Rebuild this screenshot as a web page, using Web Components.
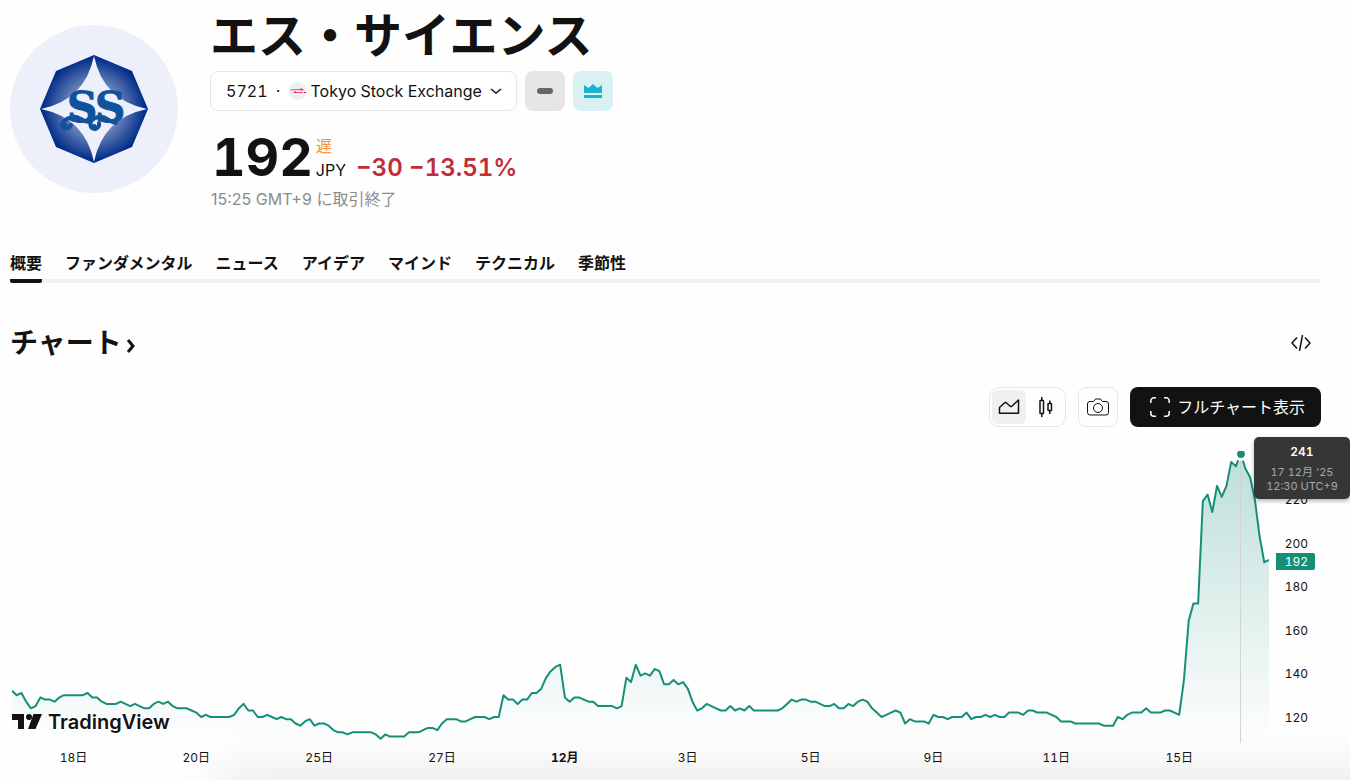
<!DOCTYPE html>
<html lang="ja">
<head>
<meta charset="utf-8">
<meta name="viewport" content="width=device-width, initial-scale=1">
<title>エス・サイエンス</title>
<style>
  body {
    margin: 0;
    background: #fefefe;
    color: #121212;
    font-family: Inter, "Noto Sans CJK JP", sans-serif;
    font-size: 16px;
    line-height: 24px;
    font-variant-numeric: tabular-nums;
    overflow-x: hidden;
  }
</style>
</head>
<body>
<symbol-page>
  <symbol-header name="エス・サイエンス" ticker="5721" exchange="Tokyo Stock Exchange"></symbol-header>
  <symbol-tabs>
    <a href="#overview" aria-current="page">概要</a>
    <a href="#fundamentals">ファンダメンタル</a>
    <a href="#news">ニュース</a>
    <a href="#ideas">アイデア</a>
    <a href="#minds">マインド</a>
    <a href="#technicals">テクニカル</a>
    <a href="#seasonals">季節性</a>
  </symbol-tabs>
  <chart-section heading="チャート">
    <price-chart>
      <chart-tooltip slot="tooltip" value="241">
        <span>17 12月 '25</span>
        <span>12:30 UTC+9</span>
      </chart-tooltip>
    </price-chart>
  </chart-section>
</symbol-page>

<script>
'use strict';

(function () {
  class SymbolPage extends HTMLElement {
    constructor() {
      super();
      const shadow = this.attachShadow({ mode: 'open' });
      shadow.innerHTML = `
        <style>
          :host {
            display: block;
            padding: 8px 29px 0 10px;
          }
          /* shade that rises from the lower edge of the window */
          .shade {
            position: fixed;
            left: 220px;
            right: -60px;
            bottom: -20px;
            height: 20px;
            box-shadow: 0 0 50px rgb(0 0 0 / 18%);
            pointer-events: none;
          }
        </style>
        <slot></slot>
        <div class="shade"></div>
      `;
    }
  }

  class SymbolHeader extends HTMLElement {
    constructor() {
      super();
      const shadow = this.attachShadow({ mode: 'open' });
      const name = this.getAttribute('name');
      const ticker = this.getAttribute('ticker');
      const exchange = this.getAttribute('exchange');

      shadow.innerHTML = `
        <style>
          :host {
            display: flex;
            gap: 32px;
          }
          .logo {
            flex: none;
            width: 168px;
            height: 168px;
            margin-top: 17px;
          }
          h1 {
            margin: 0 0 7px;
            font-size: 48px;
            line-height: 56px;
            font-weight: 700;
          }
          .row {
            display: flex;
            gap: 8px;
          }
          button {
            display: flex;
            align-items: center;
            justify-content: center;
            box-sizing: border-box;
            height: 40px;
            min-width: 40px;
            padding: 0;
            border: none;
            border-radius: 8px;
            font: inherit;
            color: inherit;
            cursor: pointer;
          }
          .exchange {
            padding: 0 14px 0 15px;
            border: 1px solid #e6e6e6;
            background: #fff;
            font-variant-numeric: tabular-nums;
          }
          .exchange .dot {
            width: 21px;
            text-align: center;
          }
          .exchange .mark {
            margin-right: 4px;
          }
          .exchange .arrow {
            margin-left: 8px;
          }
          .market {
            background: #e6e6e6;
          }
          .listed {
            background: #daf1f4;
          }
          .quote {
            display: flex;
            align-items: flex-end;
            margin-top: 19px;
            padding-left: 2px;
          }
          .price {
            font-size: 52px;
            line-height: 56px;
            font-weight: 700;
          }
          .unit {
            display: flex;
            flex-direction: column;
            margin: 0 10px 4px 3px;
          }
          .delay {
            color: #f7933c;
          }
          .change {
            font-size: 24px;
            line-height: 32px;
            margin-bottom: 2px;
            font-weight: 600;
            color: #c22c38;
          }
          .time {
            margin: 1px 0 0 1px;
            color: #8c8c8c;
            font-variant-numeric: normal;
          }
        </style>
        <svg class="logo" viewBox="0 0 168 168" role="img" aria-label="${name}">
          <defs>
            <radialGradient id="facet" gradientUnits="userSpaceOnUse" cx="84" cy="84" r="54">
              <stop offset=".4" stop-color="#7d93c3"/>
              <stop offset=".95" stop-color="#002c88"/>
            </radialGradient>
          </defs>
          <circle cx="84" cy="84" r="84" fill="#edf0fa"/>
          <path fill="url(#facet)" d="M84 30l38 16 16 38-16 38-38 16-38-16-16-38 16-38z"/>
          <path fill="#edf0fa" d="M84 31Q93 75 137 84 93 93 84 137 75 93 31 84 75 75 84 31z"/>
          <g fill="#11529f" stroke="#11529f" stroke-width="1" font-family="DejaVu Serif, serif" font-weight="700" font-size="42">
            <text x="57" y="97">S</text>
            <text x="85" y="97">S</text>
          </g>
          <g fill="none" stroke="#11529f" stroke-width="4" stroke-linecap="round">
            <path d="M79 97C70 96 69 90 62 92 55 94 50 98 53 102 56 105 60 103 61 100"/>
            <path d="M106 98C98 97 96 90 89 92 82 93 79 97 81 102 84 106 90 103 89 98"/>
          </g>
          <circle cx="55" cy="101" r="3" fill="#11529f"/>
          <circle cx="84" cy="102" r="3" fill="#11529f"/>
        </svg>
        <div>
          <h1>${name}</h1>
          <div class="row">
            <button class="exchange">
              <span>${ticker}</span>
              <span class="dot">·</span>
              <svg class="mark" width="18" height="18" viewBox="0 0 18 18" aria-hidden="true">
                <circle cx="9" cy="9" r="9" fill="#edf0fa"/>
                <path d="M1.500 8.200L5 7.700h8M5 10.500h9" stroke="#e8223a" stroke-width=".8" fill="none"/>
                <path d="M11.500 6l4 2.200h-4zM7 9l-3 2h3zM15 10h2v1h-2z" fill="#e8112d"/>
              </svg>
              <span>${exchange}</span>
              <svg class="arrow" width="12" height="8" viewBox="0 0 12 8" fill="none" stroke="#121212" stroke-width="1.500" aria-hidden="true">
                <path d="M1 2l5 4 5-4"/>
              </svg>
            </button>
            <button class="market" aria-label="市場は休場">
              <svg width="16" height="6" viewBox="0 0 16 6"><rect width="16" height="6" rx="3" fill="#666"/></svg>
            </button>
            <button class="listed" aria-label="プライマリー上場">
              <svg width="18" height="14" viewBox="0 0 18 14" fill="#17b5cd">
                <path d="M0 1l4.500 3L9 0l4.500 4L18 1v8H0zM0 11h18v3H0z"/>
              </svg>
            </button>
          </div>
          <div class="quote">
            <span class="price">192</span>
            <span class="unit"><span class="delay">遅</span><span>JPY</span></span>
            <span class="change">−30 −13.51%</span>
          </div>
          <div class="time">15:25 GMT+9 に取引終了</div>
        </div>
      `;
    }
  }

  class SymbolTabs extends HTMLElement {
    constructor() {
      super();
      const shadow = this.attachShadow({ mode: 'open' });
      shadow.innerHTML = `
        <style>
          :host {
            display: block;
            margin-top: 40px;
          }
          nav {
            display: flex;
            gap: 23px;
            height: 32px;
            background: linear-gradient(#f0f0f0, #f0f0f0) bottom / 100% 4px no-repeat;
            border-radius: 2px;
          }
          ::slotted(a) {
            display: block;
            color: inherit;
            font-weight: 600;
            text-decoration: none;
          }
          ::slotted(a[aria-current]) {
            background: linear-gradient(#121212, #121212) bottom / 100% 4px no-repeat;
            border-radius: 2px;
          }
        </style>
        <nav><slot></slot></nav>
      `;
    }
  }

  class ChartSection extends HTMLElement {
    constructor() {
      super();
      const shadow = this.attachShadow({ mode: 'open' });
      const heading = this.getAttribute('heading');

      shadow.innerHTML = `
        <style>
          :host {
            display: block;
            margin-top: 40px;
          }
          header, .toolbar {
            display: flex;
            align-items: center;
          }
          header {
            justify-content: space-between;
            height: 40px;
            padding-right: 10px;
          }
          h2 {
            margin: 0;
            font-size: 28px;
            line-height: 36px;
            font-weight: 600;
          }
          h2 a {
            display: flex;
            align-items: center;
            gap: 3px;
            color: inherit;
            text-decoration: none;
          }
          h2 svg {
            margin-top: 6px;
          }
          button {
            display: flex;
            align-items: center;
            justify-content: center;
            box-sizing: border-box;
            padding: 0;
            border: none;
            background: none;
            color: inherit;
            font: inherit;
            cursor: pointer;
          }
          .toolbar {
            justify-content: flex-end;
            gap: 12px;
            margin-top: 24px;
          }
          .types {
            display: flex;
            gap: 3px;
            padding: 2px;
            border: 1px solid #e6e6e6;
            border-radius: 10px;
          }
          .types button {
            width: 34px;
            height: 34px;
            border-radius: 6px;
          }
          .types button[aria-pressed="true"] {
            background: #f0f0f0;
          }
          .snapshot {
            width: 40px;
            height: 40px;
            border: 1px solid #e6e6e6;
            border-radius: 8px;
          }
          .full {
            gap: 7px;
            height: 40px;
            padding: 0 16px 0 20px;
            border-radius: 8px;
            background: #121212;
            color: #fff;
          }
        </style>
        <header>
          <h2>
            <a href="#chart">${heading}<svg width="12" height="16" viewBox="0 0 12 16" fill="none" stroke="#121212" stroke-width="3" aria-hidden="true"><path d="M3 2l5 6-5 6"/></svg></a>
          </h2>
          <button aria-label="埋め込み">
            <svg width="20" height="16" viewBox="0 0 20 16" fill="none" stroke="#121212" stroke-width="1.500">
              <path d="M6 2.500L1 8l5 5.500M14 2.500L19 8l-5 5.500M11.500 0l-3 16"/>
            </svg>
          </button>
        </header>
        <div class="toolbar">
          <div class="types" role="group" aria-label="チャートタイプ">
            <button aria-pressed="true" aria-label="エリア">
              <svg width="22" height="16" viewBox="0 0 22 16" fill="none" stroke="#121212" stroke-width="1.500" stroke-linejoin="round">
                <path d="M1.500 8.500l5.500-5h1l4.500 4h1L20.500 1v13.200h-19z"/>
              </svg>
            </button>
            <button aria-pressed="false" aria-label="ローソク足">
              <svg width="16" height="20" viewBox="0 0 16 20" fill="none" stroke="#121212" stroke-width="1.500">
                <rect x="2" y="3.500" width="3.500" height="13" rx=".5"/>
                <rect x="10" y="6.500" width="3.500" height="7" rx=".5"/>
                <path d="M3.800 0v3.500M3.800 16.500V20M11.800 3.500v3M11.800 13.500v3.500"/>
              </svg>
            </button>
          </div>
          <button class="snapshot" aria-label="スナップショット">
            <svg width="22" height="18" viewBox="0 0 22 18" fill="none" stroke="#121212">
              <path d="M3 3.500h3.500L8.500 1h5l2 2.500H19a2.500 2.500 0 0 1 2.500 2.500v8.500A2.500 2.500 0 0 1 19 17H3a2.500 2.500 0 0 1-2.500-2.500V6A2.500 2.500 0 0 1 3 3.500z"/>
              <circle cx="11" cy="10" r="4.500"/>
            </svg>
          </button>
          <button class="full">
            <svg width="20" height="20" viewBox="0 0 20 20" fill="none" stroke="#fff" stroke-width="1.500" aria-hidden="true">
              <path d="M.8 6V3.800a3 3 0 0 1 3-3H6M14 .8h2.200a3 3 0 0 1 3 3V6M19.200 14v2.200a3 3 0 0 1-3 3H14M6 19.200H3.800a3 3 0 0 1-3-3V14"/>
            </svg>
            <span>フルチャート表示</span>
          </button>
        </div>
        <slot></slot>
      `;
    }
  }

  // one close per bar
  const closes = [
    132, 130, 131, 127, 124, 125, 129, 128, 128, 127, 129, 130, 130, 130, 130, 130, 131, 129, 129, 127,
    126, 126, 126, 127, 126, 125, 126, 125, 124, 124, 126, 127, 126, 127, 125, 124, 124, 124, 123, 122,
    120, 121, 120, 120, 120, 120, 120, 121, 124, 126, 123, 123, 120, 120, 121, 120, 119, 120, 119, 119,
    117, 116, 118, 119, 116, 117, 117, 116, 114, 113, 113, 112, 113, 113, 113, 113, 113, 112, 110, 112,
    111, 111, 111, 111, 113, 113, 113, 114, 115, 115, 114, 117, 119, 119, 119, 118, 118, 119, 120, 120,
    120, 119, 120, 120, 130, 128, 128, 126, 128, 128, 131, 131, 133, 138, 141, 143, 144, 129, 127, 129,
    129, 128, 127, 127, 125, 125, 125, 125, 124, 125, 138, 136, 144, 139, 140, 139, 142, 141, 135, 135,
    137, 135, 136, 133, 127, 123, 124, 126, 125, 124, 123, 123, 125, 123, 124, 123, 125, 123, 123, 123,
    123, 123, 123, 124, 126, 128, 127, 128, 128, 127, 127, 126, 125, 125, 126, 124, 124, 126, 125, 127,
    128, 127, 124, 122, 120, 121, 122, 123, 122, 117, 119, 118, 118, 118, 117, 121, 120, 120, 119, 120,
    120, 120, 122, 119, 120, 120, 121, 120, 121, 120, 120, 122, 122, 122, 121, 123, 123, 122, 122, 122,
    121, 120, 118, 118, 118, 117, 117, 117, 117, 117, 117, 116, 116, 116, 120, 119, 121, 122, 122, 122,
    124, 122, 122, 122, 123, 123, 122, 121, 137, 164, 172, 172, 219, 222, 214, 226, 221, 226, 237, 235,
    241, 234, 230, 220, 203, 191, 192,
  ];
  const plotHeight = 292;
  const activeBar = 260;
  const days = ['18日', '20日', '25日', '27日', '12月', '3日', '5日', '9日', '11日', '15日'];
  const prices = [220, 200, 180, 160, 140, 120];

  const toY = (price) => 266 - (price - 120) * 2.18;

  class PriceChart extends HTMLElement {
    constructor() {
      super();
      const shadow = this.attachShadow({ mode: 'open' });
      const last = closes.length - 1;
      const points = closes.map((price, i) => `${i},${toY(price).toFixed(1)}`);

      shadow.innerHTML = `
        <style>
          :host {
            position: relative;
            display: grid;
            grid-template-columns: 1fr 52px;
            margin-top: 24px;
            padding-left: 2px;
            font-size: 12px;
            line-height: 16px;
          }
          .plot {
            position: relative;
            height: ${plotHeight}px;
            overflow: hidden;
          }
          .plot > svg {
            display: block;
            width: 100%;
            height: 100%;
          }
          .line {
            fill: none;
            stroke: #168f78;
            stroke-width: 2;
            stroke-linejoin: round;
            vector-effect: non-scaling-stroke;
          }
          .crosshair {
            position: absolute;
            left: ${(activeBar / last) * 100}%;
            top: 0;
            bottom: 0;
            width: 1px;
            margin-left: -1px;
            background: #d3d3d3;
          }
          .dot {
            position: absolute;
            left: ${(activeBar / last) * 100}%;
            top: ${Math.ceil(toY(closes[activeBar]))}px;
            width: 8px;
            height: 8px;
            margin: -7px;
            border: 3px solid #fefefe;
            border-radius: 50%;
            background: #168f78;
            background-clip: padding-box;
          }
          .brand {
            position: absolute;
            left: 0;
            bottom: 9px;
            display: flex;
            align-items: center;
            gap: 6px;
            color: #121212;
            font-size: 20px;
            line-height: 24px;
            font-weight: 600;
            text-decoration: none;
            text-shadow: 0 0 2px #fff, 1px 1px #fff, -1px -1px #fff;
          }
          .prices {
            position: relative;
            display: flex;
            flex-direction: column;
            justify-content: space-between;
            box-sizing: border-box;
            height: ${plotHeight}px;
            padding: 41px 13px 17px 0;
            text-align: right;
          }
          .last {
            position: absolute;
            left: 7px;
            right: 6px;
            top: ${Math.ceil(toY(closes[last])) - 8}px;
            box-sizing: border-box;
            padding-right: 7px;
            line-height: 17px;
            border-radius: 0 2px 2px 0;
            background: #168f78;
            color: #fff;
          }
          .days {
            display: flex;
            margin-top: 7px;
            text-align: center;
          }
          .days span {
            flex: 26;
          }
          .days i {
            flex: 6;
          }
          .month {
            font-weight: 700;
          }
        </style>
        <div class="plot">
          <svg viewBox="0 0 ${last} ${plotHeight}" preserveAspectRatio="none" aria-hidden="true">
            <defs>
              <linearGradient id="area" x1="0" y1="0" x2="0" y2="1">
                <stop offset="0" stop-color="#168f78" stop-opacity=".28"/>
                <stop offset="1" stop-color="#168f78" stop-opacity="0"/>
              </linearGradient>
            </defs>
            <path fill="url(#area)" d="M0,${plotHeight} L${points.join(' ')} L${last},${plotHeight}z"/>
            <polyline class="line" points="${points.join(' ')}"/>
          </svg>
          <div class="crosshair"></div>
          <div class="dot"></div>
          <a class="brand" href="#tradingview">
            <svg width="30" height="16" viewBox="0 0 30 16" fill="#121212" aria-hidden="true">
              <path d="M0 0h12v15H6V6H0zM21.500 0H30l-6.500 15H16z"/>
              <circle cx="17" cy="3" r="3"/>
            </svg>
            <span>TradingView</span>
          </a>
        </div>
        <div class="prices">
          ${prices.map((price) => `<span>${price}</span>`).join('')}
          <span class="last">${closes[last]}</span>
        </div>
        <div class="days">
          ${days.map((day) => `<span class="${day.endsWith('月') ? 'month' : 'day'}">${day}</span>`).join('')}
          <i></i>
        </div>
        <slot name="tooltip"></slot>
      `;
    }
  }

  class ChartTooltip extends HTMLElement {
    constructor() {
      super();
      const shadow = this.attachShadow({ mode: 'open' });
      shadow.innerHTML = `
        <style>
          :host {
            position: absolute;
            top: -14px;
            right: -29px;
            display: flex;
            flex-direction: column;
            align-items: center;
            box-sizing: border-box;
            width: 96px;
            padding: 6px 0;
            border-radius: 5px;
            background: #363636;
            box-shadow: 0 2px 4px rgb(0 0 0 / 30%);
            color: #a8a8a8;
            font-size: 11px;
            line-height: 14px;
          }
          strong {
            margin-bottom: 4px;
            color: #fff;
            font-size: 12px;
            line-height: 18px;
            font-weight: 600;
          }
        </style>
        <strong>${this.getAttribute('value')}</strong>
        <slot></slot>
      `;
    }
  }

  customElements.define('symbol-page', SymbolPage);
  customElements.define('symbol-header', SymbolHeader);
  customElements.define('symbol-tabs', SymbolTabs);
  customElements.define('chart-section', ChartSection);
  customElements.define('price-chart', PriceChart);
  customElements.define('chart-tooltip', ChartTooltip);
})();
</script>
</body>
</html>
